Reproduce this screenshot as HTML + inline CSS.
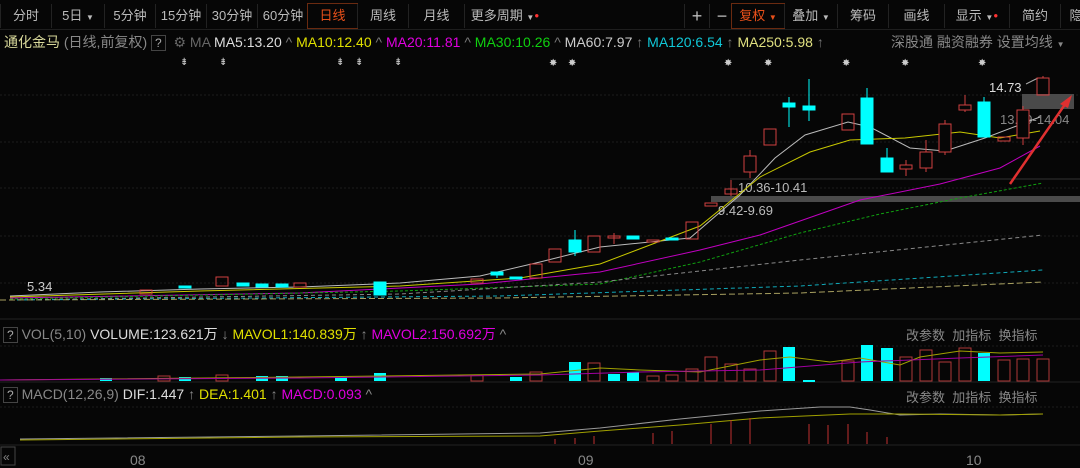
<!DOCTYPE html>
<html><head><meta charset="utf-8"><style>
body{margin:0;background:#060606;width:1080px;height:468px;overflow:hidden;font-family:"Liberation Sans","Noto Sans CJK SC",sans-serif;}
.tb{position:absolute;top:2px;height:26px;left:0;width:1080px;}
.b{position:absolute;top:2px;height:24px;line-height:24px;font-size:13px;color:#bbb;text-align:center;border-left:1px solid #222;}
.t{position:absolute;font-size:14px;white-space:nowrap;}
</style></head><body>
<div class="tb">
<div class="b" style="left:0;width:50px">分时</div>
<div class="b" style="left:51px;width:52px">5日 <span style="font-size:8px">▼</span></div>
<div class="b" style="left:104px;width:50px">5分钟</div>
<div class="b" style="left:155px;width:50px">15分钟</div>
<div class="b" style="left:206px;width:50px">30分钟</div>
<div class="b" style="left:257px;width:50px">60分钟</div>
<div class="b" style="left:307px;width:49px;color:#e8501a;border:1px solid #6a2a10;top:1px">日线</div>
<div class="b" style="left:357px;width:50px">周线</div>
<div class="b" style="left:408px;width:55px">月线</div>
<div class="b" style="left:464px;width:80px">更多周期 <span style="font-size:8px">▼</span><span style="color:#f33;font-size:8px;vertical-align:top">●</span></div>
<div class="b" style="left:684px;width:24px;font-size:18px">+</div>
<div class="b" style="left:709px;width:24px;font-size:18px">−</div>
<div class="b" style="left:731px;width:52px;color:#e8501a;border:1px solid #6a2a10;top:1px">复权 <span style="font-size:8px">▼</span></div>
<div class="b" style="left:784px;width:52px">叠加 <span style="font-size:8px">▼</span></div>
<div class="b" style="left:837px;width:50px">筹码</div>
<div class="b" style="left:888px;width:55px">画线</div>
<div class="b" style="left:944px;width:64px">显示 <span style="font-size:8px">▼</span><span style="color:#f33;font-size:8px;vertical-align:top">●</span></div>
<div class="b" style="left:1009px;width:50px">简约</div>
<div class="b" style="left:1060px;width:30px">隐</div>
</div>
<div style="position:absolute;top:29px;left:0;width:1080px;height:1px;background:#1e1e1e"></div>
<div class="t" style="left:4px;top:32px;color:#d8d89a">通化金马 <span style="color:#888">(日线,前复权)</span> <span style="color:#aaa;border:1px solid #444;padding:0 3px;font-size:12px">?</span> <span style="color:#666">&nbsp;⚙ MA</span> <span style="color:#ddd">MA5:13.20</span> <span style="color:#777">^</span> <span style="color:#e0e000">MA10:12.40</span> <span style="color:#777">^</span> <span style="color:#e000e0">MA20:11.81</span> <span style="color:#777">^</span> <span style="color:#10d010">MA30:10.26</span> <span style="color:#777">^</span> <span style="color:#ccc">MA60:7.97</span> <span style="color:#777">↑</span> <span style="color:#10c8d8">MA120:6.54</span> <span style="color:#777">↑</span> <span style="color:#e0e080">MA250:5.98</span> <span style="color:#777">↑</span></div>
<div class="t" style="left:891px;top:32px;color:#888">深股通 融资融券 设置均线 <span style="font-size:8px">▼</span></div>
<svg width="1080" height="468" style="position:absolute;left:0;top:0" font-family="Liberation Sans,sans-serif">
<g stroke="#1c1c1c" stroke-dasharray="2,2"><line x1="0" y1="95" x2="1080" y2="95"/><line x1="0" y1="142" x2="1080" y2="142"/><line x1="0" y1="188" x2="1080" y2="188"/><line x1="0" y1="236" x2="1080" y2="236"/><line x1="0" y1="283" x2="1080" y2="283"/><line x1="0" y1="346" x2="1080" y2="346"/><line x1="0" y1="407" x2="1080" y2="407"/></g>
<line x1="0" y1="319" x2="1080" y2="319" stroke="#222"/><line x1="0" y1="382" x2="1080" y2="382" stroke="#222"/><line x1="0" y1="445" x2="1080" y2="445" stroke="#222"/>
<g fill="#ccc" font-size="10"><text x="180" y="65">⇟</text><text x="219" y="65">⇟</text><text x="336" y="65">⇟</text><text x="355" y="65">⇟</text><text x="394" y="65">⇟</text><text x="549" y="66">✸</text><text x="568" y="66">✸</text><text x="724" y="66">✸</text><text x="764" y="66">✸</text><text x="842" y="66">✸</text><text x="901" y="66">✸</text><text x="978" y="66">✸</text></g>
<rect x="711" y="196" width="369" height="6" fill="#4a4a4a"/><line x1="730" y1="179" x2="1080" y2="179" stroke="#333"/>
<rect x="1022" y="94" width="52" height="15" fill="#4a4a4a"/>
<g font-size="13" fill="#bbb"><text x="738" y="192">10.36-10.41</text><text x="718" y="215">9.42-9.69</text><text x="1000" y="124" fill="#888">13.39-14.04</text><text x="989" y="92" fill="#ddd">14.73</text><text x="27" y="291" fill="#ccc">5.34</text></g>
<line x1="1026" y1="84" x2="1038" y2="78" stroke="#aaa"/>
<g fill="none" stroke-width="1">
<polyline stroke="#bbb" points="10,296 100,292 200,289 300,287 400,283 480,276 540,262 600,247 690,238 740,195 775,158 805,135 848,122 870,127 910,148 945,151 985,138 1040,117"/>
<polyline stroke="#c8c800" points="10,297 200,291 400,286 520,278 600,264 700,226 760,177 810,152 850,140 905,138 960,132 1000,138 1040,131"/>
<polyline stroke="#c000c0" points="10,298 300,293 480,284 600,272 700,250 760,235 860,200 940,184 1000,168 1040,146"/>
<polyline stroke="#10a010" stroke-dasharray="3,2" points="10,299 400,291 600,284 700,262 800,233 880,214 960,198 1043,183"/>
<polyline stroke="#888" stroke-dasharray="4,3" points="10,300 400,294 600,282 800,260 1043,235"/>
<polyline stroke="#10a8b8" stroke-dasharray="4,3" points="10,300 500,296 800,286 1043,270"/>
<polyline stroke="#a8a060" stroke-dasharray="6,3" points="0,300 500,298 800,293 1043,282"/>
</g>
<g stroke="#d04040" fill="none"><line x1="1043" y1="76" x2="1043" y2="78"/><rect x="1037" y="78" width="12" height="17"/><line x1="1023" y1="106" x2="1023" y2="145"/><rect x="1017" y="110" width="12" height="28" fill="#060606"/><rect x="998" y="137" width="12" height="4"/><line x1="965" y1="95" x2="965" y2="112"/><rect x="959" y="105" width="12" height="5" fill="#060606"/><line x1="945" y1="120" x2="945" y2="155"/><rect x="939" y="124" width="12" height="28" fill="#060606"/><line x1="926" y1="140" x2="926" y2="172"/><rect x="920" y="152" width="12" height="16" fill="#060606"/><line x1="906" y1="160" x2="906" y2="176"/><rect x="900" y="165" width="12" height="4" fill="#060606"/><rect x="842" y="114" width="12" height="16"/><rect x="764" y="129" width="12" height="16"/><line x1="750" y1="150" x2="750" y2="178"/><rect x="744" y="156" width="12" height="16" fill="#060606"/><line x1="731" y1="180" x2="731" y2="196"/><rect x="725" y="189" width="12" height="5"/><rect x="705" y="203" width="12" height="3"/><rect x="686" y="222" width="12" height="17"/><rect x="647" y="240" width="12" height="2"/><line x1="614" y1="233" x2="614" y2="244"/><rect x="608" y="236" width="12" height="2"/><rect x="588" y="236" width="12" height="16"/><rect x="549" y="249" width="12" height="13"/><rect x="530" y="264" width="12" height="14"/><rect x="471" y="279" width="12" height="4"/><rect x="216" y="277" width="12" height="9"/><rect x="294" y="283" width="12" height="4"/><rect x="140" y="290" width="12" height="4"/></g>
<line x1="1010" y1="184" x2="1068" y2="100" stroke="#e03030" stroke-width="2.5"/><polygon points="1072,95 1060,104 1068,108" fill="#e03030"/>
<g fill="#00ffff" stroke="#00ffff"><line x1="984" y1="97" x2="984" y2="137"/><rect x="978" y="102" width="12" height="35"/><line x1="887" y1="148" x2="887" y2="172"/><rect x="881" y="158" width="12" height="14"/><line x1="867" y1="88" x2="867" y2="144"/><rect x="861" y="98" width="12" height="46"/><line x1="809" y1="79" x2="809" y2="121"/><rect x="803" y="106" width="12" height="4"/><line x1="789" y1="97" x2="789" y2="127"/><rect x="783" y="103" width="12" height="4"/><rect x="666" y="238" width="12" height="2"/><rect x="627" y="236" width="12" height="3"/><line x1="575" y1="230" x2="575" y2="256"/><rect x="569" y="240" width="12" height="12"/><rect x="510" y="277" width="12" height="2"/><line x1="497" y1="272" x2="497" y2="278"/><rect x="491" y="272" width="12" height="3"/><rect x="374" y="282" width="12" height="13"/><rect x="276" y="284" width="12" height="3"/><rect x="256" y="284" width="12" height="3"/><rect x="237" y="283" width="12" height="3"/><rect x="179" y="286" width="12" height="2"/></g>
<g stroke="#b03838" fill="none"><rect x="1037" y="359" width="12" height="22"/><rect x="1017" y="359" width="12" height="22"/><rect x="998" y="360" width="12" height="21"/><rect x="959" y="348" width="12" height="33"/><rect x="939" y="362" width="12" height="19"/><rect x="920" y="350" width="12" height="31"/><rect x="900" y="357" width="12" height="24"/><rect x="842" y="361" width="12" height="20"/><rect x="764" y="351" width="12" height="30"/><rect x="744" y="369" width="12" height="12"/><rect x="725" y="364" width="12" height="17"/><rect x="705" y="357" width="12" height="24"/><rect x="686" y="369" width="12" height="12"/><rect x="666" y="375" width="12" height="6"/><rect x="647" y="376" width="12" height="5"/><rect x="588" y="363" width="12" height="18"/><rect x="530" y="372" width="12" height="9"/><rect x="471" y="375" width="12" height="6"/><rect x="216" y="375" width="12" height="6"/><rect x="158" y="376" width="12" height="5"/></g>
<g fill="#00ffff"><rect x="978" y="353" width="12" height="28"/><rect x="881" y="348" width="12" height="33"/><rect x="861" y="345" width="12" height="36"/><rect x="803" y="380" width="12" height="2"/><rect x="783" y="347" width="12" height="34"/><rect x="627" y="372" width="12" height="9"/><rect x="608" y="374" width="12" height="7"/><rect x="569" y="362" width="12" height="19"/><rect x="510" y="377" width="12" height="4"/><rect x="374" y="373" width="12" height="8"/><rect x="335" y="377" width="12" height="4"/><rect x="256" y="376" width="12" height="5"/><rect x="276" y="376" width="12" height="5"/><rect x="179" y="377" width="12" height="4"/><rect x="100" y="378" width="12" height="3"/></g>
<polyline fill="none" stroke="#a0a000" points="0,380 300,377 540,374 600,368 640,370 700,372 760,360 790,357 830,362 860,358 900,365 920,357 960,351 1000,353 1043,352"/>
<polyline fill="none" stroke="#a000a0" points="0,380 300,378 540,375 640,372 760,370 860,362 960,358 1043,355"/>
<polyline fill="none" stroke="#999" points="20,439 300,436 540,433 600,428 680,419 760,411 820,407 850,407 870,410 900,415 940,414 1000,415 1043,414"/>
<polyline fill="none" stroke="#a0a000" points="20,440 300,437 540,436 600,431 680,425 760,418 850,414 900,414 1000,415 1043,414"/>
<g stroke="#c03030"><line x1="555" y1="439" x2="555" y2="444"/><line x1="575" y1="438" x2="575" y2="444"/><line x1="594" y1="436" x2="594" y2="444"/><line x1="653" y1="433" x2="653" y2="444"/><line x1="672" y1="431" x2="672" y2="444"/><line x1="711" y1="424" x2="711" y2="444"/><line x1="731" y1="420" x2="731" y2="444"/><line x1="750" y1="418" x2="750" y2="444"/><line x1="809" y1="424" x2="809" y2="444"/><line x1="828" y1="425" x2="828" y2="444"/><line x1="848" y1="424" x2="848" y2="444"/><line x1="867" y1="432" x2="867" y2="444"/><line x1="887" y1="437" x2="887" y2="444"/></g>
<g fill="#888" font-size="14"><text x="130" y="465">08</text><text x="578" y="465">09</text><text x="966" y="465">10</text></g>
<rect x="1" y="447" width="14" height="18" fill="none" stroke="#444"/><text x="3" y="461" fill="#888" font-size="12">«</text>
</svg>
<div class="t" style="left:3px;top:324px;color:#888"><span style="color:#aaa;border:1px solid #444;padding:0 3px;font-size:12px">?</span> VOL(5,10) <span style="color:#ddd">VOLUME:123.621万</span> ↓ <span style="color:#e0e000">MAVOL1:140.839万</span> ↑ <span style="color:#e000e0">MAVOL2:150.692万</span> ^</div>
<div class="t" style="left:3px;top:386px;color:#888"><span style="color:#aaa;border:1px solid #444;padding:0 3px;font-size:12px">?</span> MACD(12,26,9) <span style="color:#ddd">DIF:1.447</span> ↑ <span style="color:#e0e000">DEA:1.401</span> ↑ <span style="color:#e000e0">MACD:0.093</span> ^</div>
<div class="t" style="left:906px;top:325px;color:#888;font-size:13px">改参数 &nbsp;加指标 &nbsp;换指标</div>
<div class="t" style="left:906px;top:387px;color:#888;font-size:13px">改参数 &nbsp;加指标 &nbsp;换指标</div>
</body></html>
